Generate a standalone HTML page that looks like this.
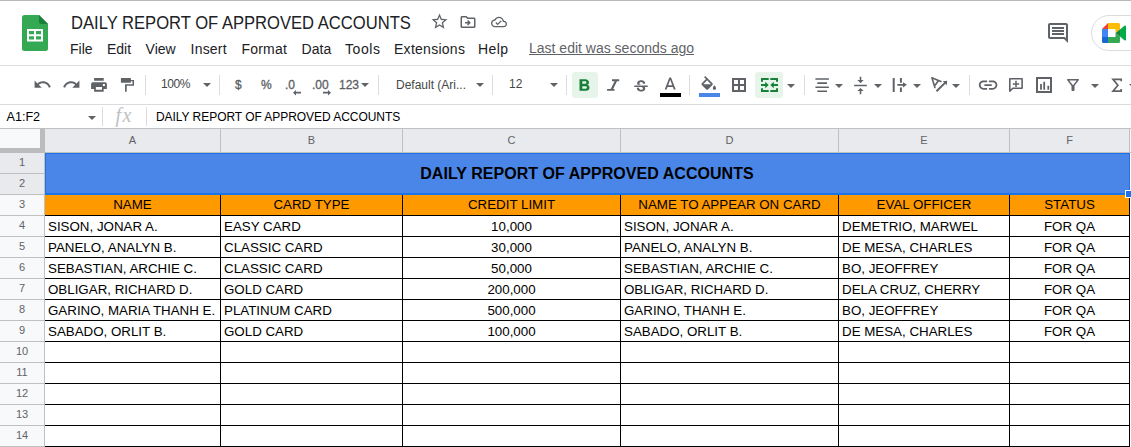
<!DOCTYPE html>
<html><head><meta charset="utf-8"><title>DAILY REPORT OF APPROVED ACCOUNTS</title>
<style>
*{box-sizing:border-box;margin:0;padding:0}
html,body{width:1131px;height:447px;overflow:hidden;background:#fff;font-family:"Liberation Sans",Arial,sans-serif;color:#000}
.abs{position:absolute}
#app{position:relative;width:1131px;height:447px;overflow:hidden}
.hl{position:absolute;height:1px;background:#dadce0;left:0;width:1131px}
.menu span{position:absolute;top:41px;font-size:14px;line-height:16px;color:#202124;white-space:nowrap}
.md{-webkit-text-stroke:0.3px #5a5e63;color:#5a5e63 !important}
.tb{position:absolute;font-size:12px;color:#444746;white-space:nowrap;line-height:14px}
.sep{position:absolute;width:1px;background:#dadce0;top:75px;height:20px}
.ch{position:absolute;top:129px;height:23px;background:#f8f9fa;border-right:1px solid #c0c0c0;font-size:11px;color:#5f6368;text-align:center;line-height:22px}
.rh{position:absolute;left:0;width:45px;height:21px;background:#f8f9fa;border-bottom:1px solid #c0c0c0;border-right:1px solid #c0c0c0;font-size:11px;color:#5f6368;text-align:center;line-height:18px}
.c{position:absolute;height:21px;font-size:13.33px;line-height:20px;white-space:nowrap;overflow:hidden;color:#000}
.l{text-align:left;padding-left:3px}
.ctr{text-align:center}
.gv{position:absolute;width:1px;background:#000}
.gh{position:absolute;height:1px;background:#000}
</style></head><body><div id="app">
<div class="hl" style="top:0;background:#b9b9b9"></div>
<div class="hl" style="top:65px"></div>
<div class="hl" style="top:104px"></div>
<div class="hl" style="top:128px;background:#c0c0c0"></div>
<svg class="abs" style="left:22px;top:15px" width="26" height="36" viewBox="0 0 26 36"><path d="M2.500 0H17l9 9v24.500a2.500 2.500 0 0 1-2.500 2.500h-21A2.500 2.500 0 0 1 0 33.500V2.500A2.500 2.500 0 0 1 2.500 0z" fill="#34a853"/><path d="M17 0l9 9h-6.500A2.500 2.500 0 0 1 17 6.500z" fill="#188038"/><path d="M5 14v12.400h16V14zm2 2h5v3.200H7zm7 0h5v3.200h-5zM7 21.200h5v3.200H7zm7 0h5v3.200h-5z" fill="#fff"/></svg>
<div class="abs" id="doctitle" style="left:71px;top:12px;font-size:17.500px;line-height:22px;transform-origin:0 0;transform:scaleX(0.948);color:#202124;white-space:nowrap">DAILY REPORT OF APPROVED ACCOUNTS</div>
<div class="menu">
<span style="left:70px">File</span><span style="left:107px">Edit</span><span style="left:145.600px">View</span><span style="left:190.600px;letter-spacing:0.2px">Insert</span><span style="left:241.600px;letter-spacing:0.17px">Format</span><span style="left:301.600px">Data</span><span style="left:345px;letter-spacing:0.55px">Tools</span><span style="left:394px;letter-spacing:0.27px">Extensions</span><span style="left:478px;letter-spacing:0.45px">Help</span>
<span style="left:529px;top:40px;color:#5f6368;text-decoration:underline">Last edit was seconds ago</span>
</div>
<svg class="abs" style="left:429.5px;top:12.3px" width="19" height="19" viewBox="0 0 24 24"><path d="M22 9.240l-7.190-.620L12 2 9.190 8.630 2 9.240l5.460 4.730L5.820 21 12 17.270 18.180 21l-1.630-7.030L22 9.240zM12 15.400l-3.760 2.270 1-4.280-3.320-2.880 4.380-.380L12 6.100l1.710 4.040 4.380.380-3.320 2.880 1 4.280L12 15.400z" fill="#5f6368"/></svg>
<svg class="abs" style="left:459px;top:13px" width="18" height="18" viewBox="0 0 24 24"><path d="M20 6h-8l-2-2H4c-1.100 0-1.990.900-1.990 2L2 18c0 1.100.900 2 2 2h16c1.100 0 2-.900 2-2V8c0-1.100-.900-2-2-2zm0 12H4V6h5.170l2 2H20v10zm-7.840-1.410L15.750 13l-3.590-3.590-1.410 1.420L11.920 12H8v2h3.920l-1.170 1.170z" fill="#5f6368"/></svg>
<svg class="abs" style="left:491px;top:14px" width="16" height="16" viewBox="0 0 24 24"><path d="M19.350 10.040C18.670 6.590 15.640 4 12 4 9.110 4 6.600 5.640 5.350 8.040 2.340 8.360 0 10.910 0 14c0 3.310 2.690 6 6 6h13c2.760 0 5-2.240 5-5 0-2.640-2.050-4.780-4.650-4.960zM19 18H6c-2.210 0-4-1.790-4-4 0-2.050 1.530-3.760 3.560-3.970l1.070-.110.500-.950C8.080 7.140 9.940 6 12 6c2.620 0 4.880 1.860 5.390 4.430l.300 1.500 1.530.110c1.560.100 2.780 1.410 2.780 2.960 0 1.650-1.350 3-3 3zm-9-3.820l-2.090-2.090L6.500 13.500 10 17l6.010-6.010-1.410-1.410z" fill="#5f6368"/></svg>
<svg class="abs" style="left:1046px;top:20.8px" width="24" height="24" viewBox="0 0 24 24"><path d="M21.990 4c0-1.100-.890-2-1.990-2H4c-1.100 0-2 .900-2 2v12c0 1.100.900 2 2 2h14l4 4-.010-18zM20 4v13.170L18.830 16H4V4h16zM6 12h12v2H6zm0-3h12v2H6zm0-3h12v2H6z" fill="#5f6368"/></svg>
<div class="abs" style="left:1091px;top:15px;width:60px;height:36px;border:1px solid #dadce0;border-radius:18px;background:#fff"></div>
<svg class="abs" style="left:1102px;top:23px" width="24" height="20" viewBox="0 0 24 20">
<path d="M0 6L6 0v6z" fill="#ea4335"/>
<path d="M6 0h10.500a1.500 1.500 0 0 1 1.500 1.500V6.500L13.500 10V6H6z" fill="#fbbc04"/>
<path d="M0 6h6v8H0z" fill="#4285f4"/>
<path d="M0 14h6v6H1.500A1.500 1.500 0 0 1 0 18.500z" fill="#1967d2"/>
<path d="M6 14h7.500V10L18 13.500v5a1.500 1.500 0 0 1-1.500 1.500H6z" fill="#34a853"/>
<path d="M13.500 10L18 6.500v7z" fill="#188038"/>
<path d="M18 6.500l4.700-3.900c.500-.400 1.300-.100 1.300.600v13.600c0 .700-.800 1-1.300.600L18 13.500z" fill="#00ac47"/>
</svg>
<svg class="abs" style="left:33.3px;top:75.1px" width="19" height="19" viewBox="0 0 24 24"><path d="M12.5 8c-2.650 0-5.050.990-6.900 2.600L2 7v9h9l-3.620-3.620c1.390-1.160 3.160-1.880 5.120-1.880 3.540 0 6.550 2.310 7.600 5.500l2.370-.780C21.080 11.030 17.150 8 12.500 8z" fill="#5f6368"/></svg>
<svg class="abs" style="left:61.7px;top:75.1px" width="19" height="19" viewBox="0 0 24 24"><path d="M18.400 10.600C16.550 8.990 14.150 8 11.500 8c-4.650 0-8.580 3.030-9.960 7.220L3.900 16c1.050-3.190 4.050-5.500 7.600-5.500 1.950 0 3.730.720 5.120 1.880L13 16h9V7l-3.600 3.600z" fill="#5f6368"/></svg>
<svg class="abs" style="left:90px;top:77px" width="18" height="16" viewBox="0 0 18 16"><path fill-rule="evenodd" d="M4.100.9h9.600v2.800H4.100zM1.100 11.900V7a1.800 1.800 0 0 1 1.800-1.800h12.200a1.800 1.800 0 0 1 1.800 1.800v4.900h-3.200v2.900H4.100v-2.900zM5.900 10v2.700H12V10zM12.900 6.900V9h2V6.900z" fill="#5f6368"/></svg>
<svg class="abs" style="left:120px;top:77px" width="16" height="16" viewBox="0 0 16 16"><path d="M1.400 1h9a.500.500 0 0 1 .500.500v3.800a.500.500 0 0 1-.500.500h-9a.500.500 0 0 1-.500-.500V1.500a.500.500 0 0 1 .500-.500zM10.800 3.100H14V8.700H6.700V14.300a.500.500 0 0 1-.500.500H5.500a.500.500 0 0 1-.500-.500V7.200H12.500V4.200H10.800z" fill="#5f6368"/></svg>
<div class="sep" style="left:145px"></div>
<div class="tb" id="zoom" style="left:161px;top:77px;letter-spacing:-0.4px">100%</div>
<svg class="abs" style="left:203px;top:82.5px" width="8" height="4" viewBox="0 0 10 5"><path d="M0 0h10L5 5z" fill="#5f6368"/></svg>
<div class="sep" style="left:219px"></div>
<div class="tb md" style="left:235px;top:78px">$</div>
<div class="tb md" style="left:261px;top:78px">%</div>
<div class="tb md" style="left:285px;top:78px">.0</div>
<svg class="abs" style="left:293px;top:90.200px" width="8" height="5.400" viewBox="0 0 8 5.400"><path d="M0 2.700L3 0V1.850H8V3.550H3V5.400z" fill="#5f6368"/></svg>
<div class="tb md" style="left:312px;top:78px">.00</div>
<svg class="abs" style="left:323px;top:90.200px" width="8" height="5.400" viewBox="0 0 8 5.400"><path d="M8 2.700L5 0V1.850H0V3.550H5V5.400z" fill="#5f6368"/></svg>
<div class="tb md" style="left:339px;top:78px">123</div>
<svg class="abs" style="left:361px;top:82.5px" width="8" height="4" viewBox="0 0 10 5"><path d="M0 0h10L5 5z" fill="#5f6368"/></svg>
<div class="sep" style="left:378px"></div>
<div class="tb" id="fontname" style="left:396px;top:78px">Default (Ari...</div>
<svg class="abs" style="left:475.5px;top:82.5px" width="8" height="4" viewBox="0 0 10 5"><path d="M0 0h10L5 5z" fill="#5f6368"/></svg>
<div class="sep" style="left:492px"></div>
<div class="tb" id="fsize" style="left:509px;top:77px">12</div>
<svg class="abs" style="left:550px;top:82.5px" width="8" height="4" viewBox="0 0 10 5"><path d="M0 0h10L5 5z" fill="#5f6368"/></svg>
<div class="sep" style="left:566px"></div>
<div class="abs" style="left:572px;top:72px;width:26px;height:26px;border-radius:3px;background:#e6f4ea"></div>
<svg class="abs" style="left:573.2px;top:76px" width="22.300" height="19.700" viewBox="0 0 24 24" preserveAspectRatio="none"><path d="M15.600 10.790c.970-.670 1.650-1.770 1.650-2.790 0-2.260-1.750-4-4-4H7v14h7.040c2.090 0 3.710-1.700 3.710-3.790 0-1.520-.860-2.820-2.150-3.420zM10 6.500h3c.830 0 1.500.670 1.500 1.500s-.670 1.500-1.500 1.500h-3v-3zm3.500 9H10v-3h3.500c.830 0 1.500.670 1.500 1.500s-.670 1.500-1.500 1.500z" fill="#188038"/></svg>
<svg class="abs" style="left:600px;top:70px" width="30" height="30" viewBox="600 70 30 30"><path d="M612 79.300H619.200V81.200H617L613.100 88.900H614.500V90.800H607.100V88.900H610.700L614.600 81.200H612Z" fill="#5f6368"/></svg>
<svg class="abs" style="left:632px;top:77.65px" width="18" height="18" viewBox="0 0 24 24"><path d="M7.240 8.750c-.260-.480-.390-1.030-.390-1.670 0-.610.130-1.160.400-1.670.260-.500.630-.930 1.110-1.290.480-.350 1.050-.630 1.700-.830.660-.190 1.390-.290 2.180-.290.810 0 1.540.110 2.210.340.660.220 1.230.540 1.690.940.470.400.830.880 1.080 1.430.250.550.380 1.150.380 1.810h-3.010c0-.310-.050-.590-.150-.850-.090-.270-.240-.490-.440-.680-.200-.190-.450-.330-.750-.440-.300-.100-.660-.160-1.060-.160-.390 0-.740.040-1.030.130-.290.090-.530.210-.720.360-.190.160-.340.340-.440.550-.100.210-.150.430-.150.660 0 .480.250.880.740 1.210.380.250.770.480 1.410.700H7.390c-.050-.080-.110-.170-.150-.250zM21 12v-2H3v2h9.620c.180.070.400.140.550.200.370.170.660.340.870.510.210.170.350.360.430.570.070.200.110.430.110.690 0 .230-.050.450-.140.660-.090.200-.230.380-.420.530-.190.150-.420.260-.710.350-.290.080-.630.130-1.010.130-.430 0-.830-.040-1.180-.130s-.660-.230-.910-.420c-.250-.190-.450-.440-.590-.750-.140-.310-.250-.760-.250-1.210H6.400c0 .550.080 1.130.240 1.580.160.450.370.850.650 1.210.280.350.600.660.980.920.370.260.780.480 1.220.650.440.170.900.300 1.380.390.480.080.960.130 1.440.130.800 0 1.530-.090 2.180-.280s1.210-.450 1.670-.790c.460-.340.820-.770 1.070-1.270s.380-1.070.380-1.710c0-.600-.100-1.140-.310-1.610-.050-.110-.110-.230-.170-.330H21z" fill="#5f6368"/></svg>
<svg class="abs" style="left:660px;top:74.55px" width="20.4" height="20.4" viewBox="0 0 24 24"><path d="M11 3L5.500 17h2.250l1.120-3h6.250l1.120 3h2.250L13 3h-2zm-1.380 9L12 5.670 14.380 12H9.620z" fill="#5f6368"/></svg>
<div class="abs" style="left:660px;top:92.500px;width:21px;height:4px;background:#000"></div>
<div class="sep" style="left:689px"></div>
<svg class="abs" style="left:699.3px;top:76px" width="19.5" height="19.5" viewBox="0 0 24 24"><path d="M16.560 8.940L7.620 0 6.210 1.410l2.380 2.380-5.150 5.150c-.590.590-.590 1.540 0 2.120l5.500 5.500c.290.290.680.440 1.060.440s.770-.150 1.060-.440l5.500-5.500c.590-.580.590-1.530 0-2.120zM5.210 10L10 5.210 14.790 10H5.210zM19 11.500s-2 2.170-2 3.500c0 1.100.900 2 2 2s2-.900 2-2c0-1.330-2-3.500-2-3.500z" fill="#5f6368"/></svg>
<div class="abs" style="left:699px;top:92.500px;width:21px;height:4px;background:#4a86e8"></div>
<svg class="abs" style="left:732px;top:77.900px" width="14" height="14" viewBox="0 0 14 14"><path fill-rule="evenodd" d="M0 0h14v14H0zM2 2v4h4V2zM8 2v4h4V2zM2 8v4h4V8zM8 8v4h4V8z" fill="#5f6368"/></svg>
<div class="abs" style="left:755px;top:72px;width:28px;height:26px;border-radius:3px;background:#e6f4ea"></div>
<svg class="abs" style="left:760.700px;top:77.900px" width="17" height="14" viewBox="0 0 17 14" fill="#188038">
<path d="M0 0H7.700V2H2V3.800H0zM0 14H7.700V12H2V10.200H0zM0 6H4.200V3.800L7.700 7 4.200 10.200V8H0z"/>
<path d="M17 0H9.300V2H15V3.800H17zM17 14H9.300V12H15V10.200H17zM17 6H12.800V3.800L9.300 7 12.800 10.200V8H17z"/>
</svg>
<svg class="abs" style="left:786.8px;top:83.6px" width="8" height="4" viewBox="0 0 10 5"><path d="M0 0h10L5 5z" fill="#5f6368"/></svg>
<div class="sep" style="left:804px"></div>
<svg class="abs" style="left:810px;top:70px" width="160" height="30" viewBox="810 70 160 30" fill="#5f6368">
<path d="M815.400 78.200h13.500v1.600h-13.500zM817.300 82.300h9.700v1.600h-9.700zM815.400 86.400h13.500v1.600h-13.500zM817.300 90.500h9.700v1.600h-9.700z"/>
<path d="M892.700 78h2v14h-2zM899.900 78h2v4.800h-2zM899.900 87.400h2V92h-2zM897.300 83.900H903V82.200L906.900 84.800 903 87.400V85.700H897.300z"/>
<path d="M931.900 77.800L940.900 81.500M931.900 77.800L934.900 87.600M938.500 80.500L935.300 85" fill="none" stroke="#5f6368" stroke-width="1.600" stroke-linecap="round"/>
<path d="M936.500 91.200L946 81.900" fill="none" stroke="#5f6368" stroke-width="2"/>
<path d="M942.800 81.200L947.200 80.800 946.800 85.200z"/>
</svg>
<svg class="abs" style="left:834.8px;top:83.6px" width="8" height="4" viewBox="0 0 10 5"><path d="M0 0h10L5 5z" fill="#5f6368"/></svg>
<svg class="abs" style="left:851.1px;top:75.5px" width="19" height="19" viewBox="0 0 24 24"><path d="M8 19h3v4h2v-4h3l-4-4-4 4zm8-14h-3V1h-2v4H8l4 4 4-4zM4 11v2h16v-2H4z" fill="#5f6368"/></svg>
<svg class="abs" style="left:873.9px;top:83.6px" width="8" height="4" viewBox="0 0 10 5"><path d="M0 0h10L5 5z" fill="#5f6368"/></svg>
<svg class="abs" style="left:913px;top:83.6px" width="8" height="4" viewBox="0 0 10 5"><path d="M0 0h10L5 5z" fill="#5f6368"/></svg>
<svg class="abs" style="left:952px;top:83.6px" width="8" height="4" viewBox="0 0 10 5"><path d="M0 0h10L5 5z" fill="#5f6368"/></svg>
<div class="sep" style="left:969px"></div>
<svg class="abs" style="left:977px;top:74.2px" width="22.2" height="22.2" viewBox="0 0 24 24"><path d="M3.900 12c0-1.710 1.390-3.100 3.100-3.100h4V7H7c-2.760 0-5 2.240-5 5s2.240 5 5 5h4v-1.900H7c-1.710 0-3.100-1.390-3.100-3.100zM8 13h8v-2H8v2zm9-6h-4v1.900h4c1.710 0 3.100 1.390 3.100 3.100s-1.390 3.100-3.100 3.100h-4V17h4c2.760 0 5-2.240 5-5s-2.240-5-5-5z" fill="#5f6368"/></svg>
<svg class="abs" style="left:1000px;top:70px" width="131" height="30" viewBox="1000 70 131 30">
<path d="M1009.800 78.800h12.300v9.400h-9.300l-3 3z" fill="none" stroke="#5f6368" stroke-width="1.600" stroke-linejoin="round"/>
<path d="M1015.250 80.700h1.500v2.450H1019.200v1.500H1016.750v2.450h-1.500V84.650H1012.800v-1.500h2.450z" fill="#5f6368"/>
<path d="M1037 78h14v14h-14z" fill="none" stroke="#5f6368" stroke-width="2"/>
<path d="M1040.100 83.900h1.800v5.800h-1.800zM1043.300 81.700h1.800v8h-1.800zM1047.400 85.800h1.800v3.900h-1.800z" fill="#5f6368"/>
<path d="M1121.200 81.300V79.300H1113L1117.900 85.200 1113 91.100H1121.200V89.100" fill="none" stroke="#5f6368" stroke-width="1.700" stroke-linejoin="miter"/>
</svg>
<svg class="abs" style="left:1064px;top:76px" width="18" height="18" viewBox="0 0 24 24"><path d="M7 6h10l-5.010 6.300L7 6zm-2.750-.390C6.270 8.200 10 13 10 13v6c0 .550.450 1 1 1h2c.550 0 1-.450 1-1v-6s3.720-4.800 5.740-7.390c.510-.660.040-1.610-.790-1.610H5.040c-.830 0-1.300.950-.790 1.610z" fill="#5f6368"/></svg>
<svg class="abs" style="left:1090.9px;top:83.6px" width="8" height="4" viewBox="0 0 10 5"><path d="M0 0h10L5 5z" fill="#5f6368"/></svg>
<svg class="abs" style="left:1129px;top:83.6px" width="8" height="4" viewBox="0 0 10 5"><path d="M0 0h10L5 5z" fill="#5f6368"/></svg>
<div class="tb" id="cellref" style="left:6.500px;top:110px;font-size:12.600px;color:#000">A1:F2</div>
<svg class="abs" style="left:88.2px;top:115.7px" width="8" height="4" viewBox="0 0 10 5"><path d="M0 0h10L5 5z" fill="#5f6368"/></svg>
<div class="sep" style="left:102px;top:107px;height:19px"></div>
<div class="abs" id="fx" style="left:115.500px;top:104px;font-family:'Liberation Serif',serif;font-style:italic;font-size:20px;letter-spacing:1.500px;line-height:22px;color:#bdc1c6">fx</div>
<div class="sep" style="left:146px;top:107px;height:19px"></div>
<div class="tb" id="fxtext" style="left:156px;top:110px;font-size:12px;letter-spacing:-0.05px;color:#000">DAILY REPORT OF APPROVED ACCOUNTS</div>
<div class="abs" style="left:0;top:129px;width:1131px;height:24px;background:#c0c0c0"></div><div class="abs" style="left:0;top:129px;width:1131px;height:23px;background:#f8f9fa"></div>
<div class="ch" style="left:45px;width:176px;background:#e8eaed">A</div>
<div class="ch" style="left:221px;width:182px;background:#e8eaed">B</div>
<div class="ch" style="left:403px;width:218px;background:#e8eaed">C</div>
<div class="ch" style="left:621px;width:218px;background:#e8eaed">D</div>
<div class="ch" style="left:839px;width:171px;background:#e8eaed">E</div>
<div class="ch" style="left:1010px;width:120px;background:#e8eaed">F</div>
<div class="ch" style="left:1130px;width:10px;border:0"></div>
<div class="abs" style="left:0;top:129px;width:45px;height:24px;background:#bcbcbc"></div><div class="abs" style="left:0;top:129px;width:40px;height:19px;background:#f8f9fa"></div>
<div class="rh" style="top:153px;background:#e8eaed">1</div>
<div class="rh" style="top:174px;background:#e8eaed">2</div>
<div class="rh" style="top:195px;background:#f8f9fa">3</div>
<div class="rh" style="top:216px;background:#f8f9fa">4</div>
<div class="rh" style="top:237px;background:#f8f9fa">5</div>
<div class="rh" style="top:258px;background:#f8f9fa">6</div>
<div class="rh" style="top:279px;background:#f8f9fa">7</div>
<div class="rh" style="top:300px;background:#f8f9fa">8</div>
<div class="rh" style="top:321px;background:#f8f9fa">9</div>
<div class="rh" style="top:342px;background:#f8f9fa">10</div>
<div class="rh" style="top:363px;background:#f8f9fa">11</div>
<div class="rh" style="top:384px;background:#f8f9fa">12</div>
<div class="rh" style="top:405px;background:#f8f9fa">13</div>
<div class="rh" style="top:426px;background:#f8f9fa">14</div>
<div class="rh" style="top:447px;background:#f8f9fa">15</div>
<div class="abs" style="left:45px;top:153px;width:1085px;height:42px;background:#4a86e8"></div>
<div class="abs" id="ttl" style="left:44.500px;top:154px;width:1085px;height:41px;line-height:40px;letter-spacing:0.04px;text-align:center;font-weight:bold;font-size:16px;color:#000">DAILY REPORT OF APPROVED ACCOUNTS</div>
<div class="abs" style="left:45px;top:195px;width:1085px;height:20px;background:#ff9900"></div>
<div class="c ctr" style="left:45px;top:195px;width:175px;">NAME</div>
<div class="c ctr" style="left:221px;top:195px;width:181px;">CARD TYPE</div>
<div class="c ctr" style="left:403px;top:195px;width:217px;">CREDIT LIMIT</div>
<div class="c ctr" style="left:621px;top:195px;width:217px;">NAME TO APPEAR ON CARD</div>
<div class="c ctr" style="left:839px;top:195px;width:170px;">EVAL OFFICER</div>
<div class="c ctr" style="left:1010px;top:195px;width:119px;">STATUS</div>
<div class="c l" style="left:45px;top:217px;width:175px">SISON, JONAR A.</div>
<div class="c l" style="left:221px;top:217px;width:181px">EASY CARD</div>
<div class="c ctr" style="left:403px;top:217px;width:217px">10,000</div>
<div class="c l" style="left:621px;top:217px;width:217px">SISON, JONAR A.</div>
<div class="c l" style="left:839px;top:217px;width:170px">DEMETRIO, MARWEL</div>
<div class="c ctr" style="left:1010px;top:217px;width:119px">FOR QA</div>
<div class="c l" style="left:45px;top:238px;width:175px">PANELO, ANALYN B.</div>
<div class="c l" style="left:221px;top:238px;width:181px">CLASSIC CARD</div>
<div class="c ctr" style="left:403px;top:238px;width:217px">30,000</div>
<div class="c l" style="left:621px;top:238px;width:217px">PANELO, ANALYN B.</div>
<div class="c l" style="left:839px;top:238px;width:170px">DE MESA, CHARLES</div>
<div class="c ctr" style="left:1010px;top:238px;width:119px">FOR QA</div>
<div class="c l" style="left:45px;top:259px;width:175px">SEBASTIAN, ARCHIE C.</div>
<div class="c l" style="left:221px;top:259px;width:181px">CLASSIC CARD</div>
<div class="c ctr" style="left:403px;top:259px;width:217px">50,000</div>
<div class="c l" style="left:621px;top:259px;width:217px">SEBASTIAN, ARCHIE C.</div>
<div class="c l" style="left:839px;top:259px;width:170px">BO, JEOFFREY</div>
<div class="c ctr" style="left:1010px;top:259px;width:119px">FOR QA</div>
<div class="c l" style="left:45px;top:280px;width:175px">OBLIGAR, RICHARD D.</div>
<div class="c l" style="left:221px;top:280px;width:181px">GOLD CARD</div>
<div class="c ctr" style="left:403px;top:280px;width:217px">200,000</div>
<div class="c l" style="left:621px;top:280px;width:217px">OBLIGAR, RICHARD D.</div>
<div class="c l" style="left:839px;top:280px;width:170px">DELA CRUZ, CHERRY</div>
<div class="c ctr" style="left:1010px;top:280px;width:119px">FOR QA</div>
<div class="c l" style="left:45px;top:301px;width:175px">GARINO, MARIA THANH E.</div>
<div class="c l" style="left:221px;top:301px;width:181px">PLATINUM CARD</div>
<div class="c ctr" style="left:403px;top:301px;width:217px">500,000</div>
<div class="c l" style="left:621px;top:301px;width:217px">GARINO, THANH E.</div>
<div class="c l" style="left:839px;top:301px;width:170px">BO, JEOFFREY</div>
<div class="c ctr" style="left:1010px;top:301px;width:119px">FOR QA</div>
<div class="c l" style="left:45px;top:322px;width:175px">SABADO, ORLIT B.</div>
<div class="c l" style="left:221px;top:322px;width:181px">GOLD CARD</div>
<div class="c ctr" style="left:403px;top:322px;width:217px">100,000</div>
<div class="c l" style="left:621px;top:322px;width:217px">SABADO, ORLIT B.</div>
<div class="c l" style="left:839px;top:322px;width:170px">DE MESA, CHARLES</div>
<div class="c ctr" style="left:1010px;top:322px;width:119px">FOR QA</div>
<div class="gh" style="left:45px;top:194px;width:1085px"></div>
<div class="gh" style="left:45px;top:215px;width:1085px"></div>
<div class="gh" style="left:45px;top:236px;width:1085px"></div>
<div class="gh" style="left:45px;top:257px;width:1085px"></div>
<div class="gh" style="left:45px;top:278px;width:1085px"></div>
<div class="gh" style="left:45px;top:299px;width:1085px"></div>
<div class="gh" style="left:45px;top:320px;width:1085px"></div>
<div class="gh" style="left:45px;top:341px;width:1085px"></div>
<div class="gh" style="left:45px;top:362px;width:1085px"></div>
<div class="gh" style="left:45px;top:383px;width:1085px"></div>
<div class="gh" style="left:45px;top:404px;width:1085px"></div>
<div class="gh" style="left:45px;top:425px;width:1085px"></div>
<div class="gh" style="left:45px;top:446px;width:1085px"></div>
<div class="gh" style="left:45px;top:467px;width:1085px"></div>
<div class="gv" style="left:220px;top:194px;height:260px"></div>
<div class="gv" style="left:402px;top:194px;height:260px"></div>
<div class="gv" style="left:620px;top:194px;height:260px"></div>
<div class="gv" style="left:838px;top:194px;height:260px"></div>
<div class="gv" style="left:1009px;top:194px;height:260px"></div>
<div class="gv" style="left:1129px;top:194px;height:260px"></div>
<div class="abs" style="left:45px;top:153px;width:1085px;height:42px;border:1px solid #1a73e8;border-width:1px 1px 2px 1px"></div>
<div class="abs" style="left:1125px;top:190px;width:8px;height:7.500px;background:#1a73e8;border:1px solid #fff"></div>
</div></body></html>
